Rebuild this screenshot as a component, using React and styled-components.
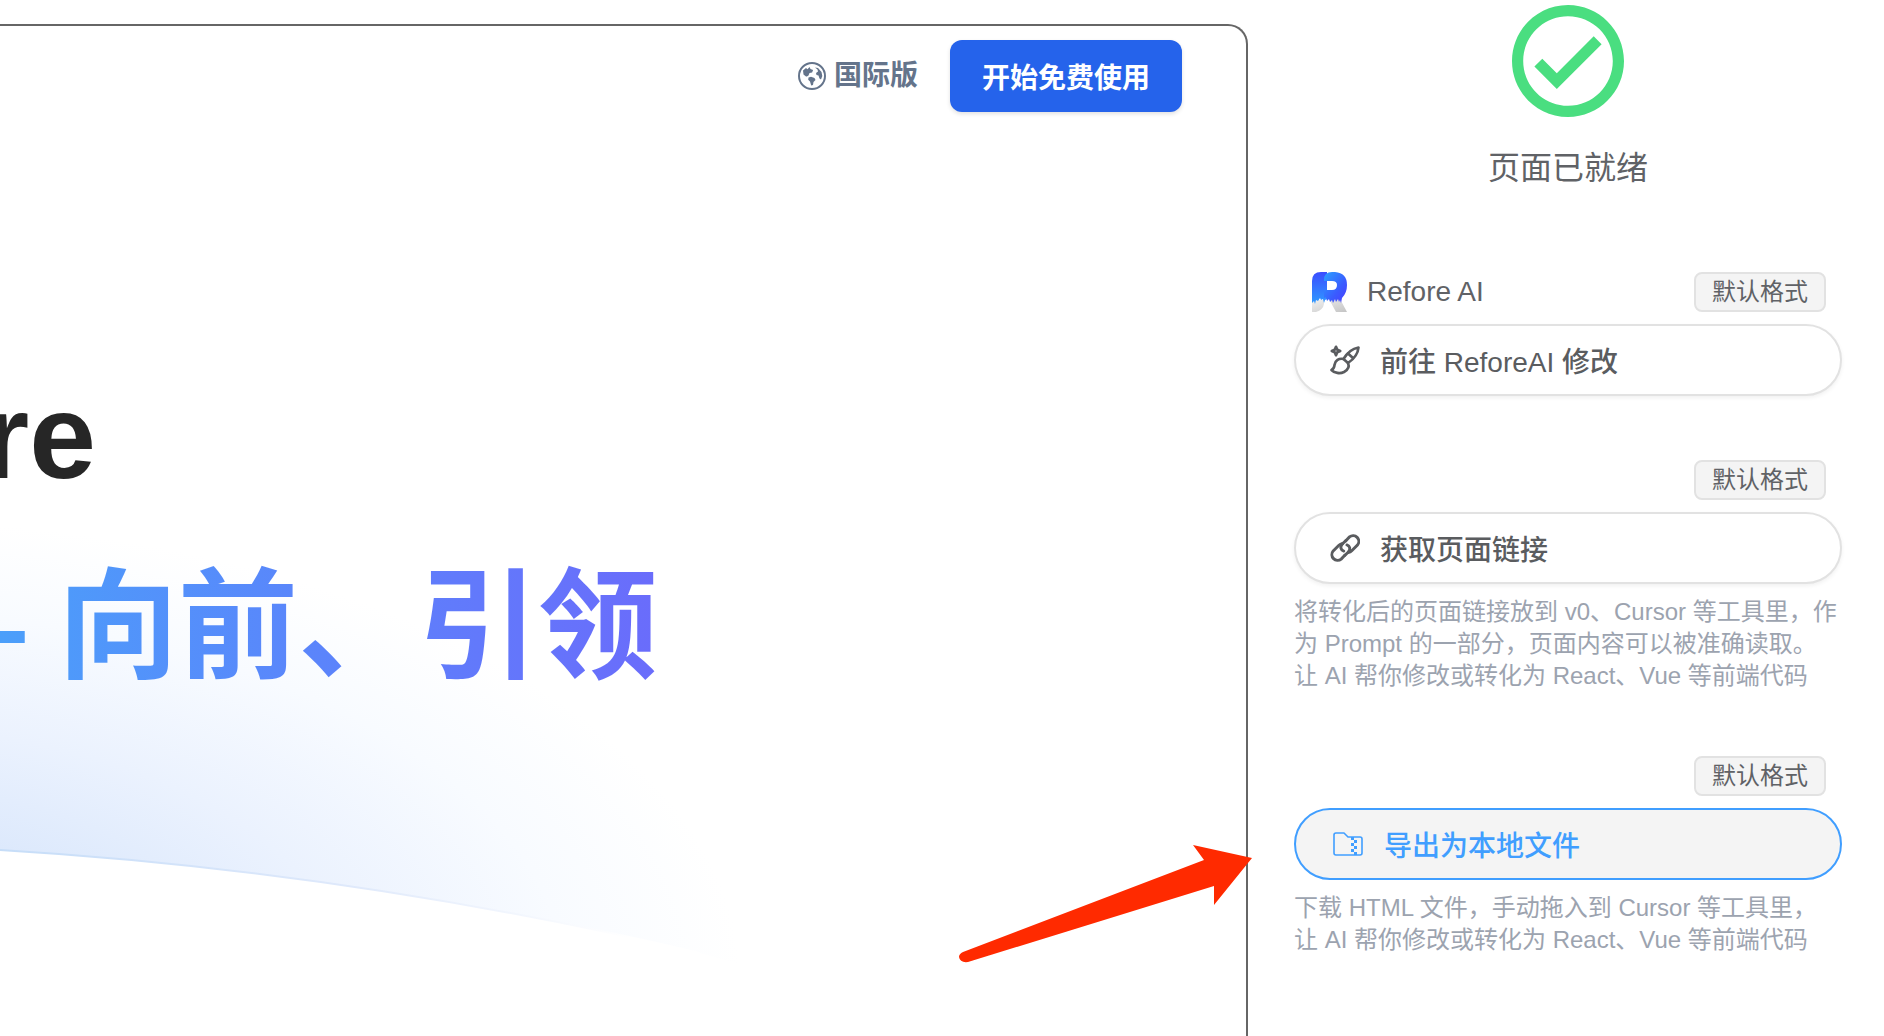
import styled, { createGlobalStyle } from 'styled-components';

const sans = '"Liberation Sans", "Noto Sans CJK SC", sans-serif';

const actions = [
  {
    id: 'refore',
    brand: 'Refore AI',
    label: '前往 ReforeAI 修改',
    Icon: BrushIcon,
  },
  {
    id: 'link',
    label: '获取页面链接',
    Icon: LinkIcon,
    desc: [
      '将转化后的页面链接放到 v0、Cursor 等工具里，作',
      '为 Prompt 的一部分，页面内容可以被准确读取。',
      '让 AI 帮你修改或转化为 React、Vue 等前端代码',
    ],
  },
  {
    id: 'export',
    label: '导出为本地文件',
    Icon: ZipIcon,
    active: true,
    desc: [
      '下载 HTML 文件，手动拖入到 Cursor 等工具里，',
      '让 AI 帮你修改或转化为 React、Vue 等前端代码',
    ],
  },
];

const App = () => {
  return (
    <>
      <GlobalStyle/>
      <Page>
        <Stage>
          <Preview>
            <Glow/>
            <Nav>
              <LangLink href="#">
                <GlobeIcon/>
                国际版
              </LangLink>
              <StartButton type="button">开始免费使用</StartButton>
            </Nav>
            <Hero>
              <Title>Refore</Title>
              <Slogan>— 向前、引领</Slogan>
            </Hero>
          </Preview>
          <Pointer/>
        </Stage>
        <Sidebar>
          <Status>
            <CheckIcon/>
            <StatusText>页面已就绪</StatusText>
          </Status>
          {
            actions.map(({id, brand, label, Icon, active, desc}) => (
              <Action key={id}>
                <ActionHead>
                  {brand && <Brand><Logo/>{brand}</Brand>}
                  <FormatButton type="button">默认格式</FormatButton>
                </ActionHead>
                <ActionButton type="button" $active={active}>
                  <Icon/>
                  {label}
                </ActionButton>
                {desc && (
                  <Desc>
                    {desc.map((line) => <span key={line}>{line}</span>)}
                  </Desc>
                )}
              </Action>
            ))
          }
        </Sidebar>
      </Page>
    </>
  )
}

function CheckIcon() {
  return (
    <svg width="112" height="112" viewBox="2 2 20 20" fill="#4ade80" aria-hidden="true">
      <path d="M16.59 7.58 10 14.17l-2.59-2.58L6 13l4 4 8-8zM12 2C6.48 2 2 6.48 2 12s4.48 10 10 10 10-4.48 10-10S17.52 2 12 2m0 18c-4.42 0-8-3.58-8-8s3.58-8 8-8 8 3.58 8 8-3.58 8-8 8"/>
    </svg>
  )
}

function GlobeIcon() {
  return (
    <svg width="28" height="28" viewBox="0 0 28 28" aria-hidden="true">
      <circle cx="14" cy="14" r="13" fill="none" stroke="currentColor" strokeWidth="2"/>
      <g fill="currentColor">
        <path d="M5 8.500 8 6l1.500 1.200L11.500 5l1 2 2.600 1-1 2.500-2.600.5-1 2.500-1.600 1L8 14.500 5.500 12.500z"/>
        <path d="M10.500 15.500l2.500-.8 3.500 1.300 1 2-2 2-.5 3-1.800.5-1.200-4-1.800-1.800z"/>
        <path d="M17 5.500l3 .5 3.500 4 .8 4-1.300 3.500-1.500-1-1-3-2-.5-.5-2 2-1.500-.5-2z"/>
      </g>
    </svg>
  )
}

function BrushIcon() {
  return (
    <svg width="32" height="32" viewBox="-2 -1 32 32" fill="none" stroke="currentColor" strokeWidth="2.700" strokeLinejoin="round" strokeLinecap="round" aria-hidden="true">
      <path d="M6 1.800 7.300 4.700 10.200 6 7.300 7.300 6 10.200 4.700 7.300 1.800 6 4.700 4.700z"/>
      <path d="M28.500 2.500C23 3.500 17 8 13.500 14l4.500 4C24 14 28 8 28.500 2.500z"/>
      <path d="M18 8.500l5 4.500M13.500 14c-4.500-1-8.500 1.500-9 6-.2 2.800-1.200 4.200-3 5 3 3.200 8.500 4 12.500 2 4-2.200 5.500-5.500 4-9"/>
    </svg>
  )
}

function LinkIcon() {
  return (
    <svg width="32" height="32" viewBox="-1 0 24 24" fill="none" stroke="currentColor" strokeWidth="2.200" strokeLinecap="round" aria-hidden="true">
      <path d="M10.200 9.500c-1.900 2.200-1 4.600 1.100 5.300M12.900 7l2.700-2.800a4.300 4.300 0 0 1 6 6.100l-4.300 4.300c-.7.700-1.500 1.100-2.300 1.200" transform="translate(-.5 -.5)"/>
      <path d="M13.800 14.500c1.900-2.200 1-4.600-1.100-5.300M11.100 17l-2.700 2.800a4.300 4.300 0 0 1-6-6.100l4.300-4.300c.7-.7 1.500-1.100 2.300-1.200" transform="translate(.5 .5)"/>
      <path d="M9.700 9 12.400 6.500M14.300 15 11.600 17.500"/>
    </svg>
  )
}

function ZipIcon() {
  return (
    <svg width="36" height="32" viewBox="-5 -4 36 32" fill="none" stroke="currentColor" strokeWidth="1.600" strokeLinejoin="round" aria-hidden="true">
      <path d="M3 1h8l4 4h12a2 2 0 0 1 2 2v14a2 2 0 0 1-2 2H3a2 2 0 0 1-2-2V3a2 2 0 0 1 2-2z"/>
      <path fill="currentColor" stroke="none" d="M18 5h3v3h-3zM21 8h3v3h-3zM18 11h3v3h-3zM21 14h3v3h-3zM18 17h3v3h-3zM21 20h3v3h-3z"/>
    </svg>
  )
}

function Logo() {
  return (
    <svg width="35" height="40" viewBox="0 0 35 40" aria-hidden="true">
      <defs>
        <linearGradient id="logoStem" x1="0" y1="0" x2="0" y2="1">
          <stop offset="0" stopColor="#3a4dff"/>
          <stop offset="1" stopColor="#2f9bff"/>
        </linearGradient>
        <linearGradient id="logoBowl" x1="0" y1="0" x2="1" y2="1">
          <stop offset="0" stopColor="#2ba0ff"/>
          <stop offset="0.600" stopColor="#3a5cff"/>
          <stop offset="1" stopColor="#4a3cff"/>
        </linearGradient>
        <linearGradient id="logoLeg" x1="0" y1="0" x2="1" y2="1">
          <stop offset="0" stopColor="#f2f2f2"/>
          <stop offset="1" stopColor="#c4c4c4"/>
        </linearGradient>
      </defs>
      <path fill="url(#logoLeg)" d="M0 28h12v4q-1 6-8 8H0zM17 27h11l7 13H24z"/>
      <path fill="url(#logoStem)" d="M0 9q0-9 9-9h6v27l-2 1-1 3-1-4-2 1-1-2-2 3-2-1-1 4-1-3-2 2z"/>
      <path fill="url(#logoBowl)" fillRule="evenodd" d="M12 8q0-8 8-8h3q12 1 12 13 0 8-5 13l-1 5-1-3-1 2-1-3-2 3-1-3-2 4-1-3-2 2-1-3-2 2-1-4-2 1zM12 9v9h8q5 0 5-5 0-4-5-4z"/>
    </svg>
  )
}

// Pale blue horizon behind the slogan
function Glow() {
  return (
    <GlowSvg viewBox="0 0 760 600" aria-hidden="true">
      <defs>
        <radialGradient id="glow" gradientUnits="userSpaceOnUse" cx="0" cy="0" r="1" gradientTransform="translate(-140 480) scale(880 460)">
          <stop offset="0" stopColor="#c8dcfa"/>
          <stop offset="0.300" stopColor="#dbe8fc"/>
          <stop offset="0.550" stopColor="#ebf2fe"/>
          <stop offset="0.800" stopColor="#f8fbff"/>
          <stop offset="1" stopColor="#fff"/>
        </radialGradient>
        <linearGradient id="horizon" x1="0" y1="0" x2="1" y2="0">
          <stop offset="0" stopColor="#c6ddf8"/>
          <stop offset="0.500" stopColor="#dfe9fb"/>
          <stop offset="0.900" stopColor="#fff"/>
        </linearGradient>
      </defs>
      <path fill="url(#glow)" d="M0 0h760v470L700 453Q350 371 0 350z"/>
      <path fill="none" stroke="url(#horizon)" strokeWidth="2" d="M0 350Q350 371 700 453"/>
    </GlowSvg>
  )
}

function Pointer() {
  return (
    <PointerSvg width="296" height="120" viewBox="0 0 296 120" aria-hidden="true">
      <path fill="#ff2a00" d="M5 108 246 16 235 1 294 14 256 61V42L10 118q-8 1-9-5 0-3 4-5z"/>
    </PointerSvg>
  )
}

const GlobalStyle = createGlobalStyle`
  * {
    box-sizing: border-box;
  }

  body {
    margin: 0;
    background: #fff;
    font-family: ${sans};
  }

  button {
    font-family: inherit;
    cursor: pointer;
  }
`;

const Page = styled.div`
  display: flex;
  min-height: 100vh;
  overflow: hidden;
`;

const Stage = styled.main`
  position: relative;
  flex: 1;
  min-width: 0;
  display: flex;
  padding-top: 24px;
`;

const Preview = styled.section`
  position: relative;
  flex: 1;
  min-width: 0;
  overflow: hidden;
  border: 2px solid #666;
  border-width: 2px 2px 0 0;
  border-top-right-radius: 20px;
`;

const GlowSvg = styled.svg`
  position: absolute;
  left: 0;
  top: 474px;
  width: 760px;
  height: 600px;
`;

const Nav = styled.nav`
  position: relative;
  display: flex;
  justify-content: flex-end;
  align-items: center;
  gap: 32px;
  padding: 14px 64px 0 0;
`;

const LangLink = styled.a`
  display: flex;
  align-items: center;
  gap: 8px;
  color: #64748b;
  font-size: 28px;
  font-weight: 700;
  line-height: 40px;
  text-decoration: none;
`;

const StartButton = styled.button`
  height: 72px;
  padding: 0 32px;
  border: 0;
  border-radius: 12px;
  background: #2563eb;
  box-shadow: 0 2px 4px rgba(0, 0, 0, 0.12);
  color: #fff;
  font-size: 28px;
  font-weight: 700;
`;

const Hero = styled.div`
  position: relative;
  display: flex;
  flex-direction: column;
  padding-top: 244px;
`;

const HeroLine = styled.h1`
  display: flex;
  justify-content: flex-end;
  margin: 0;
  font-size: 120px;
  font-weight: 700;
  white-space: nowrap;
`;

const Title = styled(HeroLine)`
  width: 96px;
  color: #262626;
  line-height: 160px;
`;

const Slogan = styled(HeroLine).attrs({as: 'h2'})`
  width: 658px;
  background: linear-gradient(90deg, #4b9ffa, #5a86fb 45%, #6a6cfb);
  background-clip: text;
  color: transparent;
  line-height: 222px;
`;

const PointerSvg = styled.svg`
  position: absolute;
  right: -6px;
  top: 844px;
  z-index: 1;
`;

const Sidebar = styled.aside`
  display: flex;
  flex-direction: column;
  gap: 64px;
  width: 636px;
  padding: 5px 42px 64px 46px;
`;

const Status = styled.div`
  display: flex;
  flex-direction: column;
  align-items: center;
  gap: 27px;
  padding-bottom: 16px;
`;

const StatusText = styled.p`
  margin: 0;
  color: #606266;
  font-size: 32px;
  line-height: 48px;
`;

const Action = styled.section`
  display: flex;
  flex-direction: column;
  gap: 12px;
`;

const ActionHead = styled.div`
  display: flex;
  align-items: center;
  padding: 0 16px 0 18px;
`;

const Brand = styled.div`
  display: flex;
  align-items: center;
  gap: 20px;
  color: #606266;
  font-size: 28px;
  line-height: 40px;
`;

const FormatButton = styled.button`
  height: 40px;
  margin-left: auto;
  padding: 0 16px;
  border: 2px solid #e2e2e2;
  border-radius: 8px;
  background: #f4f4f4;
  color: #606266;
  font-size: 24px;
  line-height: 36px;
`;

const ActionButton = styled.button`
  display: flex;
  align-items: center;
  gap: 20px;
  height: 72px;
  padding: 0 32px;
  border: 2px solid ${({$active}) => $active ? '#409eff' : '#e2e2e2'};
  border-radius: 36px;
  background: ${({$active}) => $active ? '#f4f4f4' : '#fff'};
  box-shadow: ${({$active}) => $active ? 'none' : '0 2px 4px rgba(0, 0, 0, 0.06)'};
  color: ${({$active}) => $active ? '#409eff' : '#5a5c5f'};
  font-size: 28px;
  font-weight: 500;
`;

const Desc = styled.p`
  display: flex;
  flex-direction: column;
  margin: 0;
  color: #9ca3af;
  font-size: 24px;
  line-height: 32px;
  white-space: nowrap;
`;

export default App;
